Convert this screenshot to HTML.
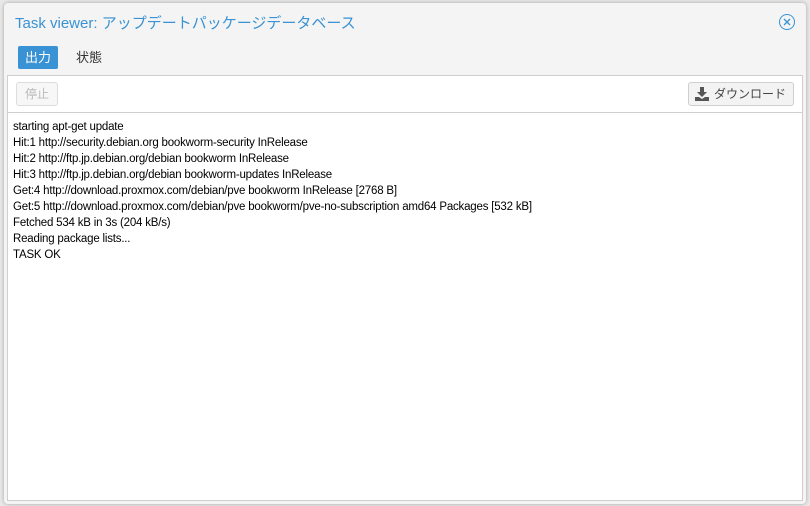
<!DOCTYPE html>
<html><head><meta charset="utf-8"><style>
body{margin:0;width:810px;height:506px;background:#e9e9e9;position:relative;overflow:hidden;font-family:"Liberation Sans","Noto Sans CJK JP",sans-serif;}
.win{position:absolute;left:4px;top:3px;width:802px;height:501px;background:#f4f4f4;border-radius:4px;box-shadow:0 0 4px rgba(0,0,0,.3);}
.title{position:absolute;left:11px;top:9px;font-size:15px;color:#3892d4;}
.close{position:absolute;left:775px;top:11px;width:14px;height:14px;border:1.3px solid #3892d4;border-radius:50%;}
.tab1{position:absolute;left:14px;top:43px;width:40px;height:23px;background:#3892d4;border-radius:2px;color:#fff;font-size:13px;line-height:23px;text-align:center;}
.tab2{position:absolute;left:72px;top:43px;font-size:13px;line-height:23px;color:#333;}
.panel{position:absolute;left:3px;top:72px;width:794px;height:424px;background:#fff;border:1px solid #cfcfcf;}
.tb{height:36px;border-bottom:1px solid #cfcfcf;position:relative;}
.stop{position:absolute;left:8px;top:6px;width:40px;height:22px;border:1px solid #ddd;border-radius:3px;background:#f7f7f7;color:#bbb;font-size:12px;line-height:22px;text-align:center;}
.dl{position:absolute;right:8px;top:6px;width:104px;height:22px;border:1px solid #cfcfcf;border-radius:3px;background:#f3f3f3;color:#444;font-size:12px;line-height:22px;}
.out{padding:6px 0 0 5px;font-size:11.5px;line-height:16px;color:#000;white-space:pre;letter-spacing:-0.2px;}
</style></head><body>
<div class="win">
<div class="title">Task viewer: アップデートパッケージデータベース</div>
<div class="close"><svg width="14" height="14" viewBox="0 0 14 14" style="position:absolute;left:0;top:0"><path d="M4 4L10 10M10 4L4 10" stroke="#3892d4" stroke-width="1.3"/></svg></div>
<div class="tab1">出力</div><div class="tab2">状態</div>
<div class="panel">
<div class="tb"><div class="stop">停止</div>
<div class="dl"><svg width="14" height="14" viewBox="0 0 14 14" style="position:absolute;left:6px;top:4px"><path d="M5 0h4v5h3L7 10 2 5h3z M0 10h4l3 2 3-2h4v4H0z" fill="#555"/></svg><span style="position:absolute;left:25px">ダウンロード</span></div></div>
<div class="out">starting apt-get update
Hit:1 http://security.debian.org bookworm-security InRelease
Hit:2 http://ftp.jp.debian.org/debian bookworm InRelease
Hit:3 http://ftp.jp.debian.org/debian bookworm-updates InRelease
Get:4 http://download.proxmox.com/debian/pve bookworm InRelease [2768 B]
Get:5 http://download.proxmox.com/debian/pve bookworm/pve-no-subscription amd64 Packages [532 kB]
Fetched 534 kB in 3s (204 kB/s)
Reading package lists...
TASK OK</div>
</div></div>
</body></html>
